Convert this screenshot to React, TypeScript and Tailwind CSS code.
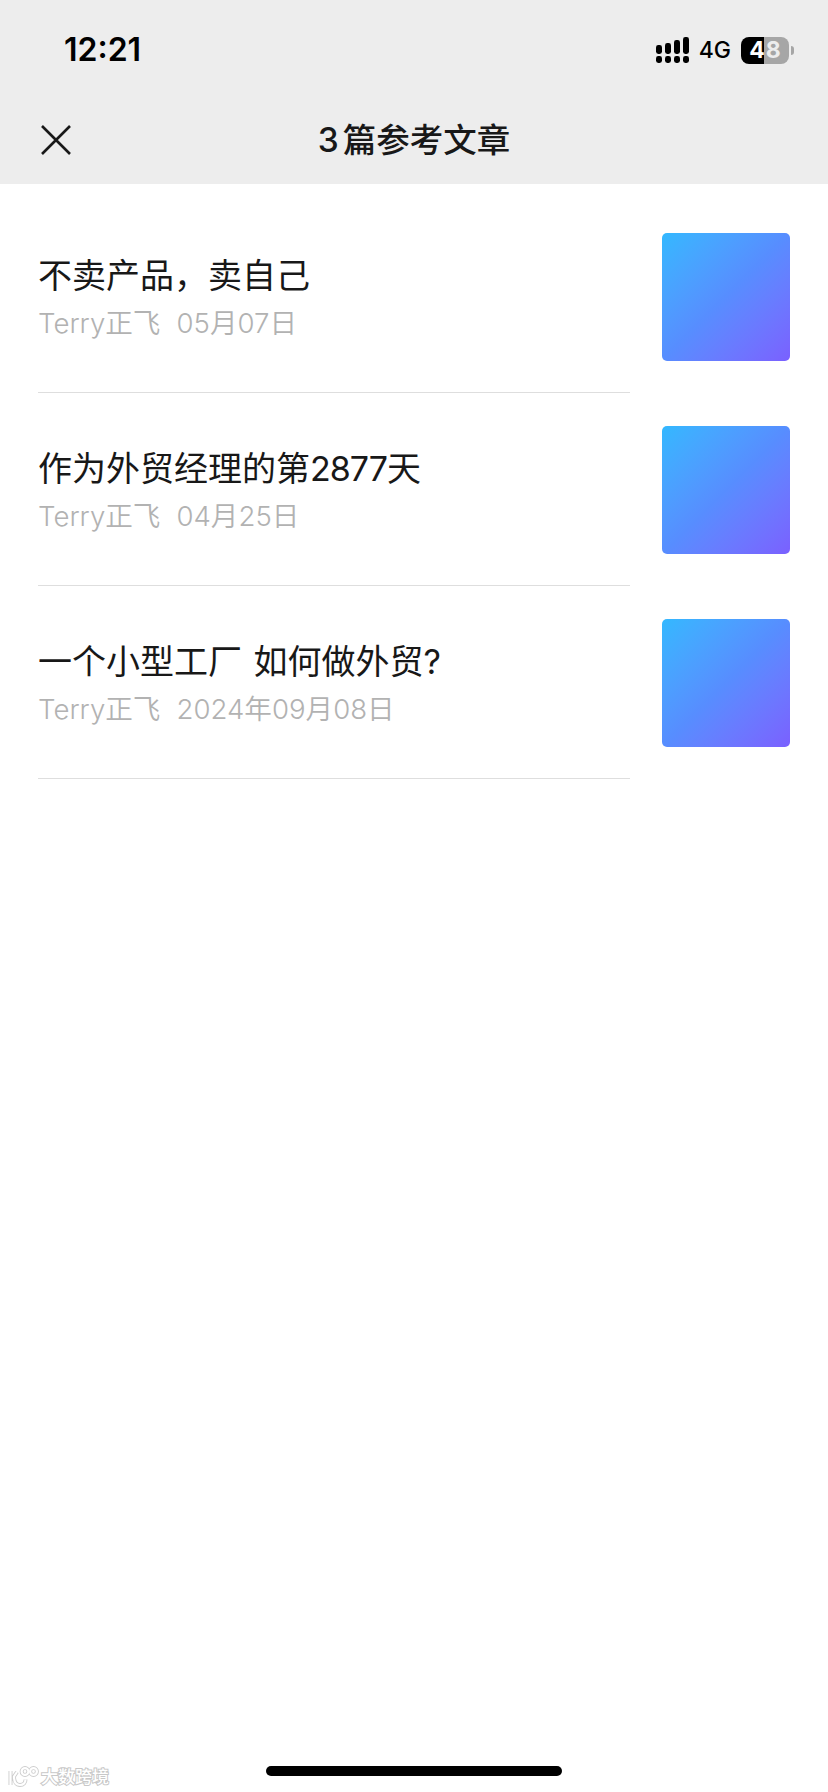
import clsx from "clsx";

type Article = {
  title: string;
  author: string;
  date: string;
};

const articles: Article[] = [
  { title: "不卖产品，卖自己", author: "Terry正飞", date: "05月07日" },
  { title: "作为外贸经理的第2877天", author: "Terry正飞", date: "04月25日" },
  {
    title: "一个小型工厂 如何做外贸?",
    author: "Terry正飞",
    date: "2024年09月08日",
  },
];

function Signal() {
  const bars = [9, 11, 14, 17];
  return (
    <svg width="34" height="27" viewBox="0 0 34 27">
      {bars.map((height, i) => (
        <g key={height}>
          <rect x={i * 9} y={17 - height} width="6" height={height} rx="2.4" />
          <rect x={i * 9} y="19" width="6" height="7" rx="2.4" />
        </g>
      ))}
    </svg>
  );
}

function Battery() {
  return (
    <div className="flex items-center gap-[2px]">
      <div className="flex h-[27px] w-12 items-center justify-center gap-px rounded-[8px] bg-[linear-gradient(90deg,#000_0_23px,#a6a6a6_23px)] text-[23px] leading-none font-bold text-white">
        <span>4</span>
        <span className="text-[#ededed]">8</span>
      </div>
      <div className="h-[9px] w-[3px] rounded-r-full bg-[#a6a6a6]" />
    </div>
  );
}

function StatusBar() {
  return (
    <div className="flex h-[98px] items-center justify-between pt-[2px] pr-[34px] pl-16 text-black">
      <span className="text-[32px] font-semibold">12:21</span>
      <div className="flex items-center">
        <Signal />
        <span className="ml-[9px] text-[23px] font-medium">4G</span>
        <div className="ml-[10px]">
          <Battery />
        </div>
      </div>
    </div>
  );
}

function NavBar() {
  return (
    <div className="grid h-[86px] grid-cols-[1fr_auto_1fr] items-center px-10 pb-[2px]">
      <svg
        width="32"
        height="32"
        viewBox="0 0 32 32"
        fill="none"
        stroke="#181818"
        strokeWidth="2.6"
      >
        <path d="M2 2L30 30M30 2L2 30" />
      </svg>
      <h1 className="text-[33.5px] font-medium">
        <span className="mr-1">3</span>篇参考文章
      </h1>
    </div>
  );
}

function ArticleRow({ article }: { article: Article }) {
  // digits are set a little tighter than the characters round them
  const parts = article.title.split(/(\d+)/);

  return (
    <li className="flex h-[193px] items-center gap-8">
      <div className="flex h-full w-[592px] flex-col justify-center border-b border-[#dedede] pt-2">
        <h2 className="text-[34px] leading-[48px] [word-spacing:2px]">
          {parts.map((part, i) => (
            <span key={i} className={clsx(i % 2 === 1 && "tracking-[-1px]")}>
              {part}
            </span>
          ))}
        </h2>
        <p className="flex gap-4 pb-[2px] text-[27.6px] leading-[46px] font-[350] text-[#b2b2b2]">
          <span>{article.author}</span>
          <span>{article.date}</span>
        </p>
      </div>
      <div className="size-32 rounded-[5px] bg-linear-to-br from-[#32b8ff] via-[#578dff] to-[#7a60ff]" />
    </li>
  );
}

function LogoShape() {
  return (
    <>
      <path d="M2.5 5V19M9 6L6 10.5C6 16 8.5 19 12 19C15.5 19 17.5 16.5 17.5 13.5" />
      <circle cx="17" cy="5.5" r="3.4" />
      <circle cx="25.5" cy="5.5" r="3.4" />
    </>
  );
}

function Watermark() {
  return (
    <div className="flex items-center gap-px">
      <svg width="32" height="22" viewBox="0 0 32 22" fill="none">
        <g stroke="#cdcdcd" strokeWidth="4">
          <LogoShape />
        </g>
        <g stroke="#fff" strokeWidth="2.2">
          <LogoShape />
        </g>
      </svg>
      <span className="text-[17px] leading-none font-medium text-white [-webkit-text-stroke:2px_#c8c8c8] [paint-order:stroke_fill]">
        大数跨境
      </span>
    </div>
  );
}

export default function App() {
  return (
    <div
      className={clsx(
        "flex h-[1792px] w-[828px] flex-col bg-white text-[#181818]",
        "font-[Inter,'Noto_Sans_CJK_SC',sans-serif]",
      )}
    >
      <header className="bg-[#ededed]">
        <StatusBar />
        <NavBar />
      </header>
      <main className="flex-1 pt-4 pl-[38px]">
        <ul>
          {articles.map((article) => (
            <ArticleRow key={article.title} article={article} />
          ))}
        </ul>
      </main>
      <footer className="grid grid-cols-[258px_296px] items-end pb-1 pl-2">
        <Watermark />
        <div className="mb-3 h-[10px] rounded-full bg-black" />
      </footer>
    </div>
  );
}
